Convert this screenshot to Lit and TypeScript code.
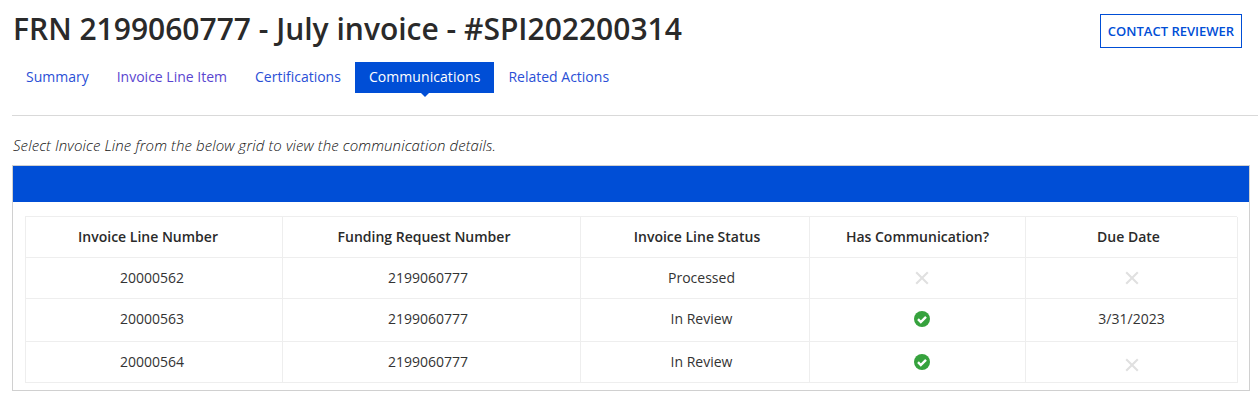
import { LitElement, html, css } from "lit";
import { customElement } from "lit/decorators.js";

const cross = html`<svg class="ico" width="14" height="14" viewBox="0 0 14 14"><path d="M1.2 1.2 12.8 12.8M12.8 1.2 1.2 12.8" stroke="#e0e0e0" stroke-width="2.1" fill="none"/></svg>`;
const check = html`<svg class="ico" width="16" height="16" viewBox="0 0 16 16"><circle cx="8" cy="8" r="8" fill="#36a23d"/><path d="M4 8.2 6.8 11 12 5.8" stroke="#fff" stroke-width="2.4" fill="none"/></svg>`;

const rows: any[][] = [
  ["20000562", "2199060777", "Processed", cross, cross],
  ["20000563", "2199060777", "In Review", check, "3/31/2023"],
  ["20000564", "2199060777", "In Review", check, cross],
];

@customElement("app-root")
export class AppRoot extends LitElement {
  static styles = css`
    :host { display: block; width: 1258px; height: 412px; overflow: hidden; background: #fff; font-family: "Open Sans", sans-serif; color: #212121; box-sizing: border-box; padding: 0 8px 0 12px; }
    .head { display: flex; justify-content: space-between; align-items: flex-start; padding: 14px 8px 0 1px; height: 48px; box-sizing: border-box; }
    h1 { margin: -2px 0 0; font-size: 30px; line-height: 34px; font-weight: 600; color: #2a2a2a; white-space: nowrap; }
    .btn { width: 142px; height: 34px; box-sizing: border-box; border: 1.5px solid #004ed6; color: #004ed6; font-size: 13px; font-weight: 600; display: flex; align-items: center; justify-content: center; white-space: nowrap; }
    .tabs { display: flex; padding-top: 14px; height: 68px; box-sizing: border-box; border-bottom: 1px solid #d9d9d9; align-items: flex-start; margin-right: -8px; }
    .tab { position: relative; height: 31px; line-height: 30px; padding: 0 14px; font-size: 14px; color: #2a4fd6; white-space: nowrap; }
    .tab.visited { color: #5a45d0; }
    .tab.active { background: #004ed6; color: #fff; font-weight: 500; letter-spacing: 0.07px; }
    .tab.active::after { content: ""; position: absolute; left: 50%; bottom: -4px; margin-left: -4px; border: 4px solid transparent; border-bottom: 0; border-top-color: #004ed6; }
    .note { font-size: 15px; font-weight: 300; letter-spacing: 0.11px; font-style: italic; line-height: 18px; padding: 20px 0 11px 1px; color: #111; white-space: nowrap; }
    .panel { border: 1px solid #d0d0d0; height: 226px; box-sizing: border-box; }
    .bar { height: 36px; background: #004ed6; }
    .wrap { padding: 14px 12px 0 12px; }
    .grid { display: grid; grid-template-columns: 257px 298px 229px 216px 212px; border: 1px solid #eeeeee; border-width: 1px 0 0 1px; font-size: 14px; }
    .cell { display: flex; align-items: center; justify-content: center; border: 1px solid #eeeeee; border-width: 0 1px 1px 0; height: 41px; box-sizing: border-box; color: #333; white-space: nowrap; }
    .cell.h { font-weight: 600; color: #2a2a2a; }
    .hl { margin-top: -2px; }
    .cell.tall { height: 43px; }
    .ico { display: block; }
    .txt { margin-top: -2px; }
    .cell.low .ico { margin-top: 6px; padding-left: 1px; }
    .tall .txt { margin-top: -4px; }
    .tall .ico { margin-top: -2px; }
    .h0 { padding-right: 12px; } .h1 { padding-right: 15px; } .h2 { padding-left: 4px; } .h4 { padding-right: 6px; }
    .b0 { padding-right: 4px; } .b1 { padding-right: 7px; } .b2 { padding-left: 13px; } .b3 { padding-left: 9px; }
  `;

  render() {
    const heads = ["Invoice Line Number", "Funding Request Number", "Invoice Line Status", "Has Communication?", "Due Date"];
    return html`
      <div class="head">
        <h1>FRN 2199060777 - July invoice - #SPI202200314</h1>
        <div class="btn">CONTACT REVIEWER</div>
      </div>
      <div class="tabs">
        <div class="tab">Summary</div>
        <div class="tab visited">Invoice Line Item</div>
        <div class="tab">Certifications</div>
        <div class="tab active">Communications</div>
        <div class="tab">Related Actions</div>
      </div>
      <div class="note">Select Invoice Line from the below grid to view the communication details.</div>
      <div class="panel">
        <div class="bar"></div>
        <div class="wrap">
          <div class="grid">
            ${heads.map((h, j) => html`<div class="cell h h${j}"><span class="hl">${h}</span></div>`)}
            ${rows.map((r, i) => r.map((c, j) => html`<div class="cell b${j} ${i === 1 ? "tall" : ""} ${i === 2 && j === 4 ? "low" : ""}">${typeof c === "string" ? html`<span class="txt">${c}</span>` : c}</div>`))}
          </div>
        </div>
      </div>
    `;
  }
}
